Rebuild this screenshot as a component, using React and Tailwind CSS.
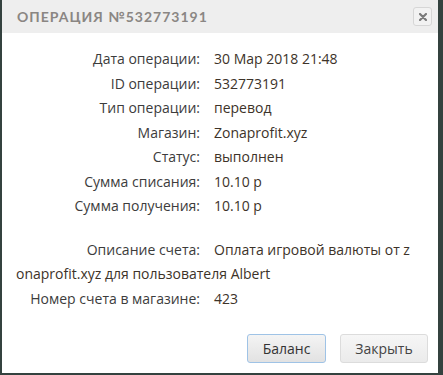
import React from "react";

const rows = [
  ["Дата операции:", "30 Мар 2018 21:48"],
  ["ID операции:", "532773191"],
  ["Тип операции:", "перевод"],
  ["Магазин:", "Zonaprofit.xyz"],
  ["Статус:", "выполнен"],
  ["Сумма списания:", "10.10 р"],
  ["Сумма получения:", "10.10 р"],
];

export default function App() {
  return (
    <div className="w-[443px] h-[375px] bg-[#34423f] pl-[2px] pr-[5px] pb-[2px]">
      <div className="h-full bg-white flex flex-col font-['Open_Sans',sans-serif]">
        <div className="h-[33px] bg-[#eeeeee] flex items-center justify-between pl-[15px] pr-[6px]">
          <h2 className="font-['Lato',sans-serif] font-bold text-[14px] tracking-[1px] text-[#8a8683] leading-none">
            ОПЕРАЦИЯ №532773191
          </h2>
          <button
            type="button"
            aria-label="Close"
            className="w-[19px] h-[19px] rounded-[3px] border border-[#d6d6d6] bg-[#f2f2f2] flex items-center justify-center"
          >
            <svg width="8" height="8" viewBox="0 0 8 8">
              <path d="M1 1L7 7M7 1L1 7" stroke="#7a7a7a" strokeWidth="2.2" strokeLinecap="round" />
            </svg>
          </button>
        </div>

        <div className="pt-[14px] pl-[14px] pr-[20px] text-[14px] leading-[24.5px]">
          {rows.map(([k, v]) => (
            <div key={k} className="flex">
              <span className="w-[184px] text-right text-[#3c3c3c]">{k}</span>
              <span className="ml-[14px] text-[#3d3329]">{v}</span>
            </div>
          ))}

          <div className="mt-[19px] break-all">
            <span className="inline-block w-[184px] text-right text-[#3c3c3c]">Описание счета:</span>
            <span className="ml-[14px] text-[#3d3329]">
              Оплата игровой валюты от zonaprofit.xyz для пользователя Albert
            </span>
          </div>
          <div className="flex">
            <span className="w-[184px] text-right text-[#3c3c3c]">Номер счета в магазине:</span>
            <span className="ml-[14px] text-[#3d3329]">423</span>
          </div>
        </div>

        <div className="mt-auto flex justify-end gap-[14px] pr-[10px] pb-[10px]">
          <button
            type="button"
            className="w-[79px] h-[29px] rounded-[3px] border border-[#9fc3e6] bg-gradient-to-b from-[#f4f4f4] to-[#e2e2e2] text-[14px] text-[#333]"
          >
            Баланс
          </button>
          <button
            type="button"
            className="w-[88px] h-[29px] rounded-[3px] border border-[#dcdcdc] bg-gradient-to-b from-[#f6f6f6] to-[#ebebeb] text-[14px] text-[#444]"
          >
            Закрыть
          </button>
        </div>
      </div>
    </div>
  );
}
